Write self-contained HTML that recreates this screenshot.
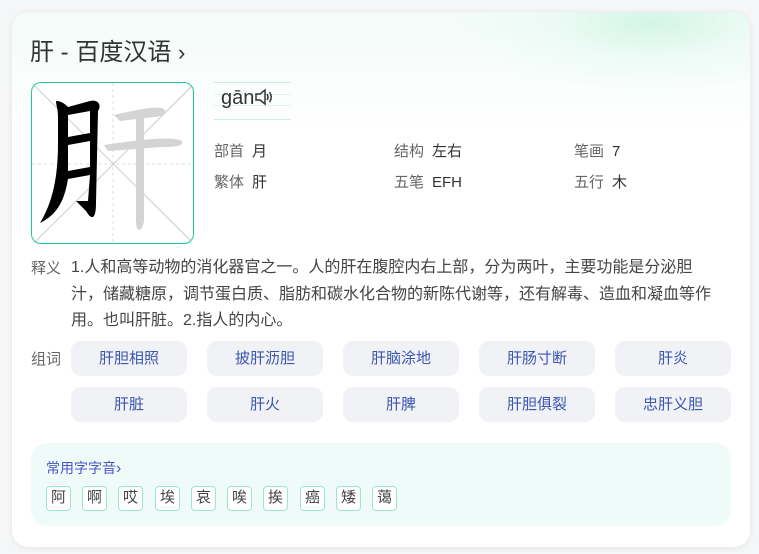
<!DOCTYPE html>
<html><head><meta charset="utf-8"><style>
*{margin:0;padding:0;box-sizing:border-box}
body{width:759px;height:554px;background:#f5f6f7;font-family:"Liberation Sans","Noto Sans CJK SC",sans-serif;position:relative;overflow:hidden}
.card{position:absolute;left:12px;top:12px;width:738px;height:535px;border-radius:16px;background:#fff;box-shadow:0 1px 6px rgba(0,0,0,.08);overflow:hidden}
.grad{position:absolute;left:0;top:0;width:738px;height:120px;background:radial-gradient(ellipse 200px 70px at 640px 10px,#d3f5e6 0%,rgba(230,250,242,.6) 50%,rgba(255,255,255,0) 100%),linear-gradient(180deg,#f3fbf8 0%,#fff 100%)}
.a{position:absolute;white-space:nowrap}
.title{left:18px;top:20px;font-size:24px;color:#333}
.box{position:absolute;left:19px;top:70px;width:163px;height:162px;border:1.5px solid #1ec99a;border-radius:10px;overflow:hidden;background:#fff}
.lab{font-size:15px;color:#666}
.lab b{font-weight:normal;color:#333;margin-left:8px}
.def{left:19px;top:245px;font-size:15px;color:#666}
.deft{position:absolute;left:59px;top:243px;width:652px;font-size:16px;line-height:26.5px;color:#444;white-space:normal}
.btn{position:absolute;width:116px;height:35px;border-radius:10px;background:#f1f2f5;color:#3a56b0;font-size:15px;text-align:center;line-height:35px}
.sub{position:absolute;left:19px;top:431px;width:700px;height:83px;border-radius:16px;background:#effbf8}
.ch{position:absolute;top:43px;width:25px;height:25px;border:1.5px solid #9ae6d3;border-radius:4px;font-size:15px;color:#444;text-align:center;line-height:22px;background:#fff}
</style></head><body>
<div class="card">
<div class="grad"></div>
<div class="a title">肝 - 百度汉语 <span style="font-size:22px">&#x203A;</span></div>
<div class="box">
<svg width="163" height="162" style="position:absolute;left:0;top:0">
<line x1="0" y1="0" x2="163" y2="162" stroke="#ccc" stroke-width="1"/>
<line x1="163" y1="0" x2="0" y2="162" stroke="#ccc" stroke-width="1"/>
<line x1="81" y1="0" x2="81" y2="162" stroke="#ddd" stroke-dasharray="3,3"/>
<line x1="0" y1="81" x2="163" y2="81" stroke="#ddd" stroke-dasharray="3,3"/>
<path d="M82 32 C100 28 125 22 132 26 C136 30 130 34 122 34 L88 38 Z M72 62 C100 58 140 52 150 58 C152 64 140 64 130 64 L76 68 Z M104 30 L112 30 L112 138 C110 150 104 150 104 138 Z" fill="#d4d4d4"/>
<path d="M24 18 C30 18 34 22 36 24 L58 18 C66 16 70 22 66 28 L64 120 C64 136 60 138 54 128 L44 118 L56 118 L58 92 L36 96 C32 120 24 132 8 140 C20 120 26 96 26 60 L26 34 C26 26 24 22 24 18 Z M36 32 L36 54 L58 50 L58 28 Z M36 62 L36 88 L58 84 L58 58 Z" fill="#000"/>
</svg>
</div>
<div class="a" style="left:202px;top:70px;width:77px;height:38px;border-top:1px solid #c8eee6;border-bottom:1px solid #c8eee6"></div>
<div class="a" style="left:202px;top:82px;width:77px;height:12px;border-top:1px solid #dff5f0;border-bottom:1px solid #dff5f0"></div>
<div class="a" style="left:209px;top:75px;font-size:20px;color:#333">gān<svg width="20" height="18" viewBox="0 0 20 18" style="vertical-align:-2px"><path d="M2 6 H6 L11 2 V16 L6 12 H2 Z" fill="none" stroke="#333" stroke-width="1.5"/><path d="M13 6 Q15 9 13 12 M15.5 4 Q19 9 15.5 14" fill="none" stroke="#333" stroke-width="1.5"/></svg></div>
<div class="a lab" style="left:202px;top:128px">部首<b>月</b></div>
<div class="a lab" style="left:382px;top:128px">结构<b>左右</b></div>
<div class="a lab" style="left:562px;top:128px">笔画<b>7</b></div>
<div class="a lab" style="left:202px;top:159px">繁体<b>肝</b></div>
<div class="a lab" style="left:382px;top:159px">五笔<b>EFH</b></div>
<div class="a lab" style="left:562px;top:159px">五行<b>木</b></div>
<div class="a def">释义</div>
<div class="deft">1.人和高等动物的消化器官之一。人的肝在腹腔内右上部，分为两叶，主要功能是分泌胆汁，储藏糖原，调节蛋白质、脂肪和碳水化合物的新陈代谢等，还有解毒、造血和凝血等作用。也叫肝脏。2.指人的内心。</div>
<div class="a def" style="top:336px">组词</div>
<div class="btn" style="left:59px;top:329px">肝胆相照</div>
<div class="btn" style="left:195px;top:329px">披肝沥胆</div>
<div class="btn" style="left:331px;top:329px">肝脑涂地</div>
<div class="btn" style="left:467px;top:329px">肝肠寸断</div>
<div class="btn" style="left:603px;top:329px">肝炎</div>
<div class="btn" style="left:59px;top:375px">肝脏</div>
<div class="btn" style="left:195px;top:375px">肝火</div>
<div class="btn" style="left:331px;top:375px">肝脾</div>
<div class="btn" style="left:467px;top:375px">肝胆俱裂</div>
<div class="btn" style="left:603px;top:375px">忠肝义胆</div>
<div class="sub">
<div class="a" style="left:15px;top:15px;font-size:14px;color:#4a55c8">常用字字音<span style="font-size:16px">&#x203A;</span></div>
<div class="ch" style="left:15px">阿</div>
<div class="ch" style="left:51px">啊</div>
<div class="ch" style="left:87px">哎</div>
<div class="ch" style="left:124px">埃</div>
<div class="ch" style="left:160px">哀</div>
<div class="ch" style="left:196px">唉</div>
<div class="ch" style="left:232px">挨</div>
<div class="ch" style="left:269px">癌</div>
<div class="ch" style="left:305px">矮</div>
<div class="ch" style="left:341px">蔼</div>
</div>
</div>
</body></html>
